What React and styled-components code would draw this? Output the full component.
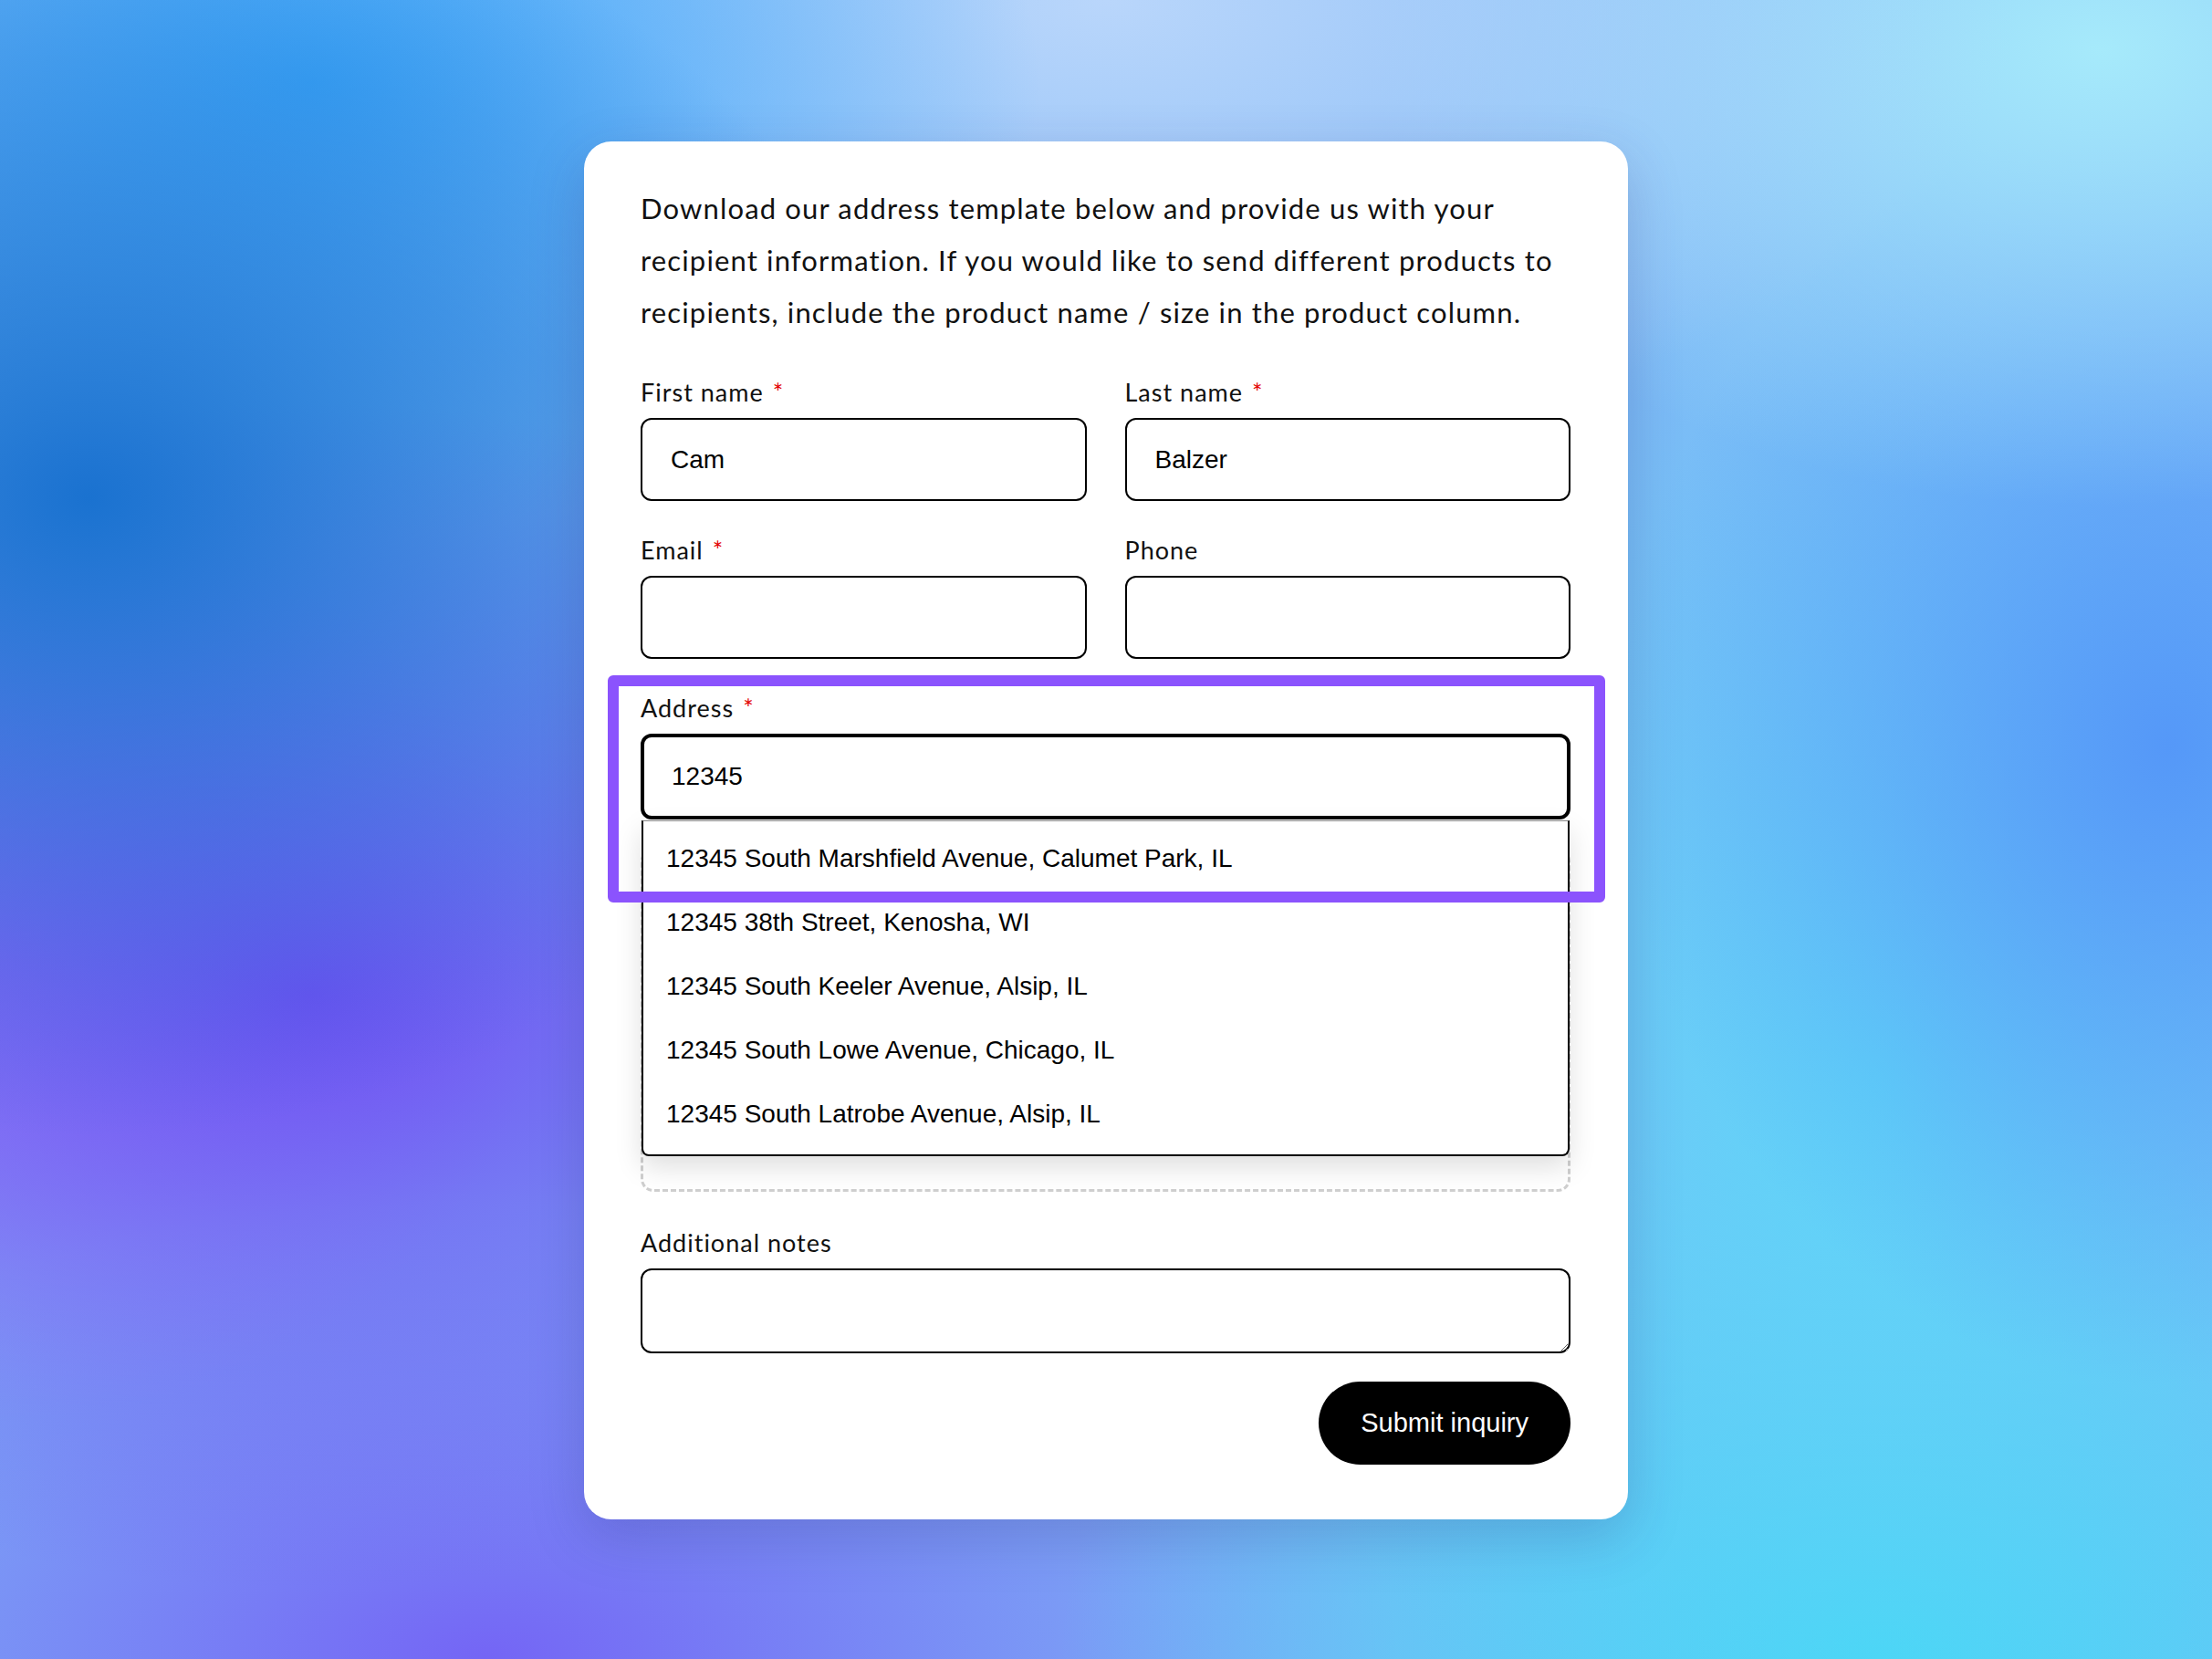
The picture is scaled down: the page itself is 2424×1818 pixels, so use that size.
import React from 'react'
import styled, { createGlobalStyle } from 'styled-components'

const Global = createGlobalStyle`
    html, body { margin: 0; padding: 0; }
    body {
        width: 2424px;
        height: 1818px;
        overflow: hidden;
    }
`;

const Bg = styled.div`
    width: 2424px;
    height: 1818px;
    display: flex;
    justify-content: center;
    align-items: flex-start;
    padding-top: 155px;
    box-sizing: border-box;
    background-color: #7fb8f6;
    background-image:
        radial-gradient(ellipse 900px 700px at 4% 30%, #1a72d0 0%, rgba(26,114,208,0) 100%),
        radial-gradient(ellipse 1000px 650px at 14% 60%, #6f4ff2 0%, rgba(111,79,242,0) 100%),
        radial-gradient(ellipse 600px 500px at 0% 58%, #a08af9 0%, rgba(160,138,249,0) 100%),
        radial-gradient(ellipse 800px 500px at 14% 5%, #3ea8fa 0%, rgba(62,168,250,0) 100%),
        radial-gradient(ellipse 1000px 500px at 50% 0%, #b9d6fb 0%, rgba(185,214,251,0) 100%),
        radial-gradient(ellipse 800px 500px at 95% 3%, #a6eafb 0%, rgba(166,234,251,0) 100%),
        radial-gradient(ellipse 600px 700px at 98% 45%, #5598f8 0%, rgba(85,152,248,0) 100%),
        radial-gradient(ellipse 700px 900px at 85% 65%, #5fd6f8 0%, rgba(95,214,248,0) 100%),
        radial-gradient(ellipse 900px 600px at 85% 100%, #44d6f5 0%, rgba(68,214,245,0) 100%),
        radial-gradient(ellipse 1000px 500px at 22% 100%, #7465f5 0%, rgba(116,101,245,0) 100%);
`;

const Card = styled.div`
    width: 1144px;
    background: #fff;
    border-radius: 30px;
    padding: 45px 63px 60px 62px;
    box-sizing: border-box;
    box-shadow: 0 20px 60px rgba(40, 40, 120, 0.22);
    display: flex;
    flex-direction: column;
`;

const Intro = styled.p`
    margin: 0 0 41px;
    font-family: Lato, "Open Sans", sans-serif;
    font-size: 31px;
    line-height: 57px;
    letter-spacing: 1.15px;
    color: #111;
`;

const Row = styled.div`
    display: grid;
    grid-template-columns: 1fr 1fr;
    gap: 42px;
    margin-bottom: 36px;
`;

const Field = styled.div`
    display: flex;
    flex-direction: column;
    position: relative;
`;

const Label = styled.label`
    font-family: Lato, "Open Sans", sans-serif;
    font-size: 27px;
    line-height: 36px;
    letter-spacing: 1px;
    color: #111;
    margin-bottom: 10px;
`;

const Req = styled.span`
    color: #e30000;
    margin-left: 10px;
`;

const Input = styled.input`
    height: ${p => p.$focus ? 94 : 91}px;
    box-sizing: border-box;
    border: ${p => p.$focus ? '4px' : '2.5px'} solid #000;
    border-radius: 12px;
    padding: 0 ${p => p.$focus ? 30 : 31}px;
    font-family: "Liberation Sans", Arial, sans-serif;
    font-size: 28px;
    color: #000;
    background: #fff;
    outline: none;
`;

const TextArea = styled.textarea`
    height: 93px;
    box-sizing: border-box;
    border: 2.5px solid #000;
    border-radius: 12px;
    padding: 20px 31px;
    font-family: "Liberation Sans", Arial, sans-serif;
    font-size: 28px;
    resize: vertical;
    outline: none;
    display: block;
`;

const Dropdown = styled.ul`
    position: absolute;
    left: 1px;
    right: 1px;
    top: 141px;
    margin: 0;
    padding: 0 0 9px;
    list-style: none;
    background: #fff;
    border: 2px solid #000;
    border-top: 1px solid #888;
    border-radius: 0 0 8px 8px;
    box-shadow: 0 12px 30px rgba(0, 0, 0, 0.13);
    z-index: 2;
`;

const Option = styled.li`
    height: 70px;
    display: flex;
    align-items: center;
    padding: 0 25px;
    font-family: "Liberation Sans", Arial, sans-serif;
    font-size: 28px;
    color: #000;
    &:first-child { height: 76px; padding-top: 6px; box-sizing: border-box; }
`;

const Highlight = styled.div`
    position: absolute;
    left: -36px;
    right: -38px;
    top: -18px;
    height: 249px;
    box-sizing: border-box;
    border: 12px solid #8b53fd;
    border-radius: 6px;
    z-index: 3;
    pointer-events: none;
`;

const DropZone = styled.div`
    height: 376px;
    margin-top: 32px;
    margin-bottom: 38px;
    border: 3px dashed #cfcfcf;
    border-radius: 14px;
    box-sizing: border-box;
`;

const Actions = styled.div`
    display: flex;
    justify-content: flex-end;
    margin-top: 31px;
`;

const Submit = styled.button`
    height: 91px;
    padding: 0 46px;
    border: none;
    border-radius: 46px;
    background: #000;
    color: #fff;
    font-family: "Liberation Sans", Arial, sans-serif;
    font-size: 29px;
    cursor: pointer;
`;

const suggestions = [
    '12345 South Marshfield Avenue, Calumet Park, IL',
    '12345 38th Street, Kenosha, WI',
    '12345 South Keeler Avenue, Alsip, IL',
    '12345 South Lowe Avenue, Chicago, IL',
    '12345 South Latrobe Avenue, Alsip, IL',
]

const App = () => {
    return (
        <Bg>
            <Global />
            <Card>
                <Intro>
                    Download our address template below and provide us with your recipient information. If you would like to send different products to recipients, include the product name / size in the product column.
                </Intro>

                <Row>
                    <Field>
                        <Label>First name<Req>*</Req></Label>
                        <Input defaultValue="Cam" />
                    </Field>
                    <Field>
                        <Label>Last name<Req>*</Req></Label>
                        <Input defaultValue="Balzer" />
                    </Field>
                </Row>

                <Row>
                    <Field>
                        <Label>Email<Req>*</Req></Label>
                        <Input />
                    </Field>
                    <Field>
                        <Label>Phone</Label>
                        <Input />
                    </Field>
                </Row>

                <Field>
                    <Label>Address<Req>*</Req></Label>
                    <Input $focus defaultValue="12345" />
                    <Dropdown>
                        {suggestions.map(s => <Option key={s}>{s}</Option>)}
                    </Dropdown>
                    <Highlight />
                </Field>

                <DropZone />

                <Field>
                    <Label>Additional notes</Label>
                    <TextArea />
                </Field>

                <Actions>
                    <Submit>Submit inquiry</Submit>
                </Actions>
            </Card>
        </Bg>
    )
}

export default App
